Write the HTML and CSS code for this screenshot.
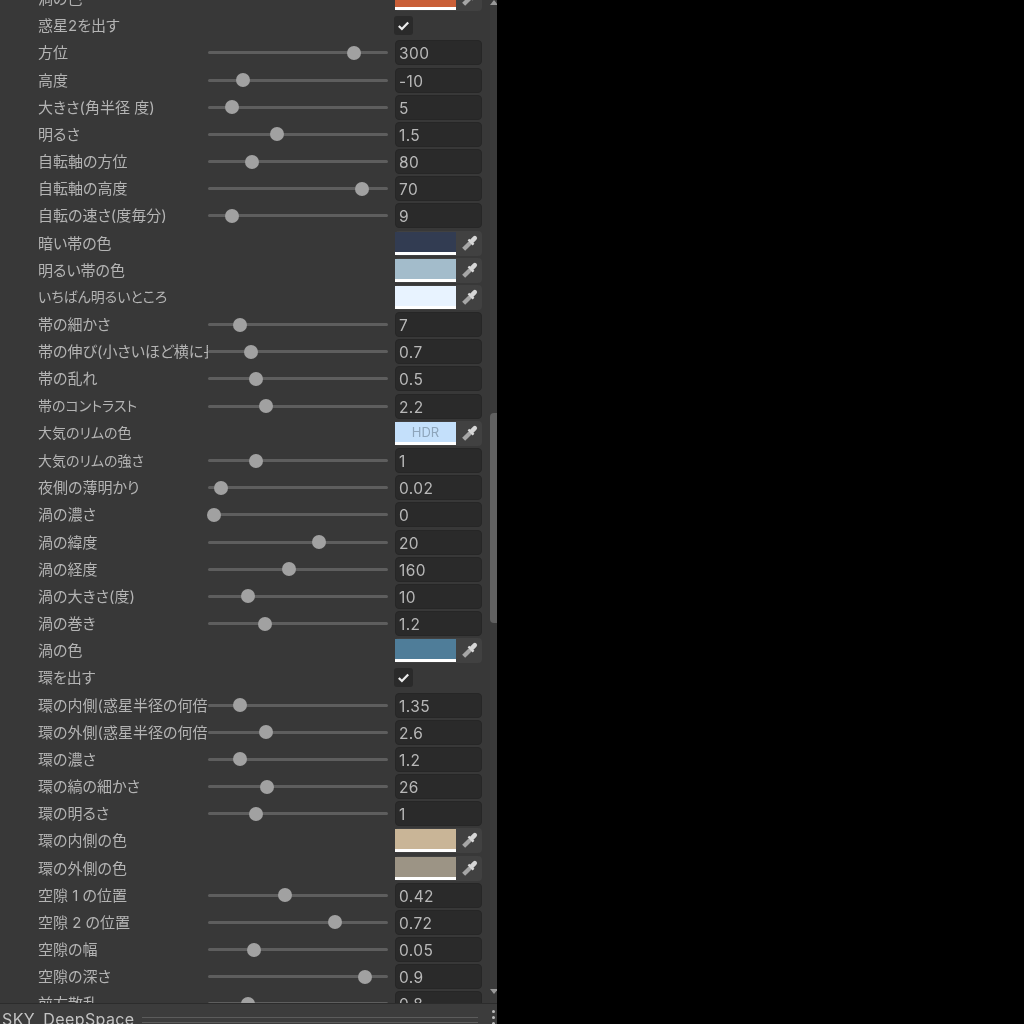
FILE: index.html
```html
<!DOCTYPE html>
<html lang="ja">
<head>
    <meta charset="UTF-8">
    <title>SKY_DeepSpace</title>
    <link rel="stylesheet" href="styles.css">
</head>
<body>
    <svg class="defs" width="0" height="0">
        <symbol id="dropper" viewBox="0 0 16 16">
            <path d="M2.500 13.500L9 7" fill="none" stroke="#a6a6a6" stroke-width="4"/>
            <path d="M7 4.200L11.800 9" fill="none" stroke="#dcdcdc" stroke-width="2.200"/>
            <path d="M10 6l3-3" fill="none" stroke="#d6d6d6" stroke-width="4.200" stroke-linecap="round"/>
        </symbol>
        <symbol id="tick" viewBox="0 0 16 16">
            <path d="M3 8.500l3.300 3.200L13 4.700" fill="none" stroke="#ececec" stroke-width="2.400"/>
        </symbol>
    </svg>
    <div class="panel">
        <div class="list">
            <div class="rows">
                <div class="row"><span class="label">渦の色</span><div class="color"><div class="swatch" style="background:#c95f38"></div><button class="picker"><svg><use href="#dropper"/></svg></button></div></div>
                <div class="row"><span class="label">惑星2を出す</span><div class="check"><svg><use href="#tick"/></svg></div></div>
                <div class="row"><span class="label">方位</span><div class="slider"><i style="left:146px"></i></div><div class="field">300</div></div>
                <div class="row"><span class="label">高度</span><div class="slider"><i style="left:35px"></i></div><div class="field">-10</div></div>
                <div class="row"><span class="label">大きさ(角半径 度)</span><div class="slider"><i style="left:24px"></i></div><div class="field">5</div></div>
                <div class="row"><span class="label">明るさ</span><div class="slider"><i style="left:69px"></i></div><div class="field">1.5</div></div>
                <div class="row"><span class="label">自転軸の方位</span><div class="slider"><i style="left:44px"></i></div><div class="field">80</div></div>
                <div class="row"><span class="label">自転軸の高度</span><div class="slider"><i style="left:154px"></i></div><div class="field">70</div></div>
                <div class="row"><span class="label">自転の速さ(度毎分)</span><div class="slider"><i style="left:24px"></i></div><div class="field">9</div></div>
                <div class="row"><span class="label">暗い帯の色</span><div class="color"><div class="swatch" style="background:#323c52"></div><button class="picker"><svg><use href="#dropper"/></svg></button></div></div>
                <div class="row"><span class="label">明るい帯の色</span><div class="color"><div class="swatch" style="background:#a3bccb"></div><button class="picker"><svg><use href="#dropper"/></svg></button></div></div>
                <div class="row"><span class="label tight">いちばん明るいところ</span><div class="color"><div class="swatch" style="background:#e8f3ff"></div><button class="picker"><svg><use href="#dropper"/></svg></button></div></div>
                <div class="row"><span class="label">帯の細かさ</span><div class="slider"><i style="left:32px"></i></div><div class="field">7</div></div>
                <div class="row"><span class="label">帯の伸び(小さいほど横に長く)</span><div class="slider"><i style="left:43px"></i></div><div class="field">0.7</div></div>
                <div class="row"><span class="label">帯の乱れ</span><div class="slider"><i style="left:48px"></i></div><div class="field">0.5</div></div>
                <div class="row"><span class="label tight">帯のコントラスト</span><div class="slider"><i style="left:58px"></i></div><div class="field">2.2</div></div>
                <div class="row"><span class="label tight">大気のリムの色</span><div class="color"><div class="swatch hdr" style="background:#c4e0fb">HDR</div><button class="picker"><svg><use href="#dropper"/></svg></button></div></div>
                <div class="row"><span class="label tight">大気のリムの強さ</span><div class="slider"><i style="left:48px"></i></div><div class="field">1</div></div>
                <div class="row"><span class="label">夜側の薄明かり</span><div class="slider"><i style="left:13px"></i></div><div class="field">0.02</div></div>
                <div class="row"><span class="label">渦の濃さ</span><div class="slider"><i style="left:6px"></i></div><div class="field">0</div></div>
                <div class="row"><span class="label">渦の緯度</span><div class="slider"><i style="left:111px"></i></div><div class="field">20</div></div>
                <div class="row"><span class="label">渦の経度</span><div class="slider"><i style="left:81px"></i></div><div class="field">160</div></div>
                <div class="row"><span class="label">渦の大きさ(度)</span><div class="slider"><i style="left:40px"></i></div><div class="field">10</div></div>
                <div class="row"><span class="label">渦の巻き</span><div class="slider"><i style="left:57px"></i></div><div class="field">1.2</div></div>
                <div class="row"><span class="label">渦の色</span><div class="color"><div class="swatch" style="background:#4f7d99"></div><button class="picker"><svg><use href="#dropper"/></svg></button></div></div>
                <div class="row"><span class="label">環を出す</span><div class="check"><svg><use href="#tick"/></svg></div></div>
                <div class="row"><span class="label">環の内側(惑星半径の何倍)</span><div class="slider"><i style="left:32px"></i></div><div class="field">1.35</div></div>
                <div class="row"><span class="label">環の外側(惑星半径の何倍)</span><div class="slider"><i style="left:58px"></i></div><div class="field">2.6</div></div>
                <div class="row"><span class="label">環の濃さ</span><div class="slider"><i style="left:32px"></i></div><div class="field">1.2</div></div>
                <div class="row"><span class="label">環の縞の細かさ</span><div class="slider"><i style="left:59px"></i></div><div class="field">26</div></div>
                <div class="row"><span class="label">環の明るさ</span><div class="slider"><i style="left:48px"></i></div><div class="field">1</div></div>
                <div class="row"><span class="label">環の内側の色</span><div class="color"><div class="swatch" style="background:#c9b597"></div><button class="picker"><svg><use href="#dropper"/></svg></button></div></div>
                <div class="row"><span class="label">環の外側の色</span><div class="color"><div class="swatch" style="background:#9c9485"></div><button class="picker"><svg><use href="#dropper"/></svg></button></div></div>
                <div class="row"><span class="label">空隙 1 の位置</span><div class="slider"><i style="left:77px"></i></div><div class="field">0.42</div></div>
                <div class="row"><span class="label">空隙 2 の位置</span><div class="slider"><i style="left:127px"></i></div><div class="field">0.72</div></div>
                <div class="row"><span class="label">空隙の幅</span><div class="slider"><i style="left:46px"></i></div><div class="field">0.05</div></div>
                <div class="row"><span class="label">空隙の深さ</span><div class="slider"><i style="left:157px"></i></div><div class="field">0.9</div></div>
                <div class="row"><span class="label">前方散乱</span><div class="slider"><i style="left:40px"></i></div><div class="field">0.8</div></div>
            </div>
            <div class="scrollbar">
                <div class="arrow up"></div>
                <div class="track"><div class="thumb"></div></div>
                <div class="arrow down"></div>
            </div>
        </div>
        <div class="footer">
            <span class="title">SKY_DeepSpace</span>
            <div class="grip"></div>
            <div class="menu"><b></b><b></b><b></b></div>
        </div>
    </div>
</body>
</html>
```

FILE: styles.css
```css
html, body {
    margin: 0;
    height: 100%;
    background: #000;
    overflow: hidden;
}

.defs {
    position: absolute;
}

.panel {
    width: 497px;
    height: 1024px;
    display: flex;
    flex-direction: column;
    background: #383838;
    color: #b4b4b4;
    font-family: "Inter", "Noto Sans CJK JP", sans-serif;
    font-size: 15px;
    font-feature-settings: "palt";
    filter: blur(0.5px);
}

.list {
    flex: 1;
    min-height: 0;
    display: flex;
    overflow: hidden;
}

.rows {
    flex: 1;
    margin-top: -15px;
    padding-left: 38px;
}

.row {
    height: 27.18px;
    display: flex;
    align-items: center;
}

.label {
    width: 170px;
    flex: none;
    padding-bottom: 2px;
    overflow: hidden;
    white-space: nowrap;
}

.label.tight {
    font-size: 14px;
}

.slider {
    width: 180px;
    height: 3px;
    flex: none;
    position: relative;
    background: #5e5e5e;
    border-radius: 2px;
}

.slider i {
    position: absolute;
    top: -5.5px;
    width: 14px;
    height: 14px;
    margin-left: -7px;
    border-radius: 50%;
    background: #a1a1a1;
}

.field {
    width: 87px;
    height: 25px;
    box-sizing: border-box;
    flex: none;
    margin-left: 7px;
    padding-left: 3px;
    background: #2a2a2a;
    border: 1px solid #262626;
    border-radius: 4px;
    font-size: 15.5px;
    line-height: 26px;
    letter-spacing: 0.4px;
    color: #b8b8b8;
}

.color {
    width: 87px;
    height: 25px;
    margin-left: 187px;
    display: flex;
    flex: none;
    background: #414141;
    border-radius: 4px;
}

.swatch {
    width: 61px;
    height: 23px;
    margin-top: 1px;
    flex: none;
    border-bottom: 3px solid #fff;
    box-sizing: border-box;
}

.hdr {
    font-size: 13px;
    line-height: 21px;
    text-align: center;
    color: #8ea5bb;
}

.picker {
    flex: 1;
    padding: 0;
    display: flex;
    align-items: center;
    justify-content: center;
    background: none;
    border: none;
}

.picker svg {
    width: 17px;
    height: 17px;
}

.check {
    width: 19px;
    height: 19px;
    margin-left: 186px;
    background: #2a2a2a;
    border-radius: 3px;
    display: flex;
    align-items: center;
    justify-content: center;
}

.check svg {
    width: 15px;
    height: 15px;
}

.scrollbar {
    width: 7px;
    flex: none;
    display: flex;
    flex-direction: column;
    align-items: center;
    background: #3a3a3a;
}

.track {
    flex: 1;
    width: 100%;
    position: relative;
}

.thumb {
    position: absolute;
    top: 408px;
    left: 0;
    width: 100%;
    height: 210px;
    background: #616161;
    border-radius: 4px 0 0 4px;
}

.arrow {
    width: 0;
    height: 0;
    border-left: 4px solid transparent;
    border-right: 4px solid transparent;
}

.arrow.up {
    border-bottom: 5px solid #999;
}

.arrow.down {
    margin-bottom: 9px;
    border-top: 5px solid #999;
}

.footer {
    height: 20px;
    flex: none;
    display: flex;
    align-items: flex-start;
    background: #3c3c3c;
    border-top: 1px solid #2c2c2c;
    overflow: hidden;
}

.title {
    width: 142px;
    padding-left: 2px;
    box-sizing: border-box;
    flex: none;
    font-size: 16px;
    line-height: 30px;
    letter-spacing: 0.4px;
    color: #c4c4c4;
}

.grip {
    width: 336px;
    height: 4px;
    margin-top: 13px;
    flex: none;
    border-top: 1px solid #5c5c5c;
    border-bottom: 1px solid #5c5c5c;
}

.menu {
    margin-left: 14px;
    margin-top: 6px;
    display: flex;
    flex-direction: column;
    gap: 3px;
}

.menu b {
    width: 3px;
    height: 3px;
    background: #bdbdbd;
    border-radius: 50%;
}
```
